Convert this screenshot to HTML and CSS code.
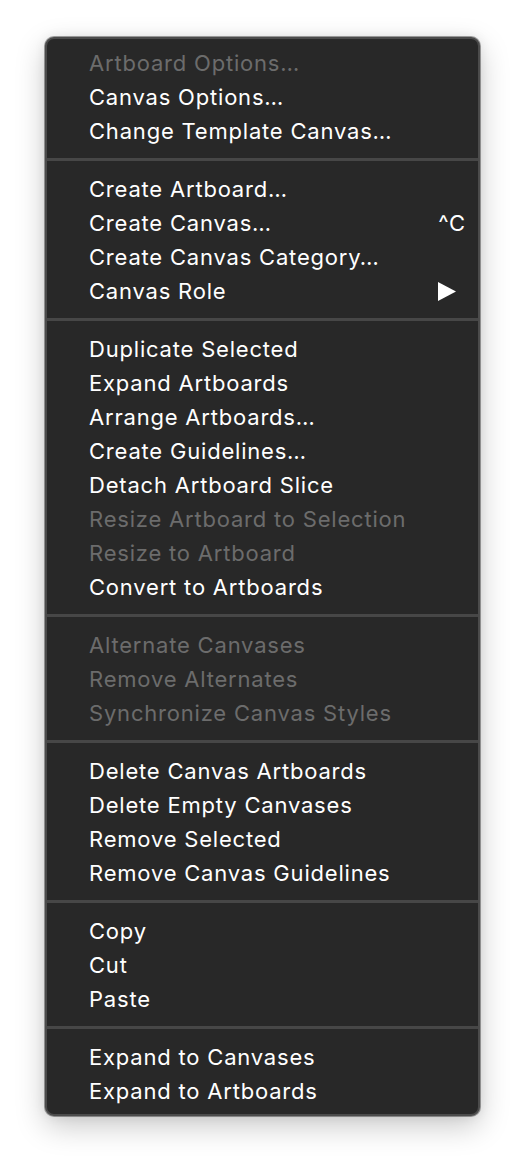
FILE: index.html
```html
<!DOCTYPE html>
<html>
<head>
<meta charset="utf-8">
<link rel="stylesheet" href="styles.css">
</head>
<body>
<div class="menu">
  <div class="item disabled">Artboard Options…</div>
  <div class="item">Canvas Options…</div>
  <div class="item">Change Template Canvas…</div>
  <div class="sep"></div>
  <div class="item">Create Artboard…</div>
  <div class="item"><span>Create Canvas…</span><span class="shortcut">^C</span></div>
  <div class="item">Create Canvas Category…</div>
  <div class="item"><span>Canvas Role</span><svg class="arrow" width="18" height="19" viewBox="0 0 18 19"><path d="M0 0 L18 9.5 L0 19 Z" fill="#fff"/></svg></div>
  <div class="sep"></div>
  <div class="item">Duplicate Selected</div>
  <div class="item">Expand Artboards</div>
  <div class="item">Arrange Artboards…</div>
  <div class="item">Create Guidelines…</div>
  <div class="item">Detach Artboard Slice</div>
  <div class="item disabled">Resize Artboard to Selection</div>
  <div class="item disabled">Resize to Artboard</div>
  <div class="item">Convert to Artboards</div>
  <div class="sep"></div>
  <div class="item disabled">Alternate Canvases</div>
  <div class="item disabled">Remove Alternates</div>
  <div class="item disabled">Synchronize Canvas Styles</div>
  <div class="sep"></div>
  <div class="item">Delete Canvas Artboards</div>
  <div class="item">Delete Empty Canvases</div>
  <div class="item">Remove Selected</div>
  <div class="item">Remove Canvas Guidelines</div>
  <div class="sep"></div>
  <div class="item">Copy</div>
  <div class="item">Cut</div>
  <div class="item">Paste</div>
  <div class="sep"></div>
  <div class="item">Expand to Canvases</div>
  <div class="item">Expand to Artboards</div>
</div>
</body>
</html>
```
FILE: styles.css
```css
html, body {
  margin: 0;
  padding: 0;
  background: #ffffff;
}
body {
  width: 526px;
  height: 1170px;
  overflow: hidden;
  font-family: Inter, "Liberation Sans", Arial, sans-serif;
}
.menu {
  box-sizing: border-box;
  margin: 37px 0 0 45px;
  width: 435px;
  height: 1079px;
  background: #282828;
  border: 2px solid #4b4b4b;
  border-radius: 9px;
  padding: 7px 0 6px;
  box-shadow: 0 0 0 1px rgba(0,0,0,0.35), 0 10px 30px rgba(0,0,0,0.22), 0 0 12px rgba(0,0,0,0.08);
}
.item {
  height: 34px;
  display: flex;
  align-items: center;
  justify-content: space-between;
  padding: 0 22px 0 42px;
  color: #ffffff;
  font-size: 22px;
  letter-spacing: 0.8px;
  line-height: 34px;
  white-space: nowrap;
}
.item.disabled {
  color: #6c6c6c;
}
.shortcut {
  margin-right: -10px;
}
.arrow {
  display: block;
  margin-right: 0;
}
.sep {
  height: 3px;
  margin: 10px 0 11px;
  background: #474747;
}
```
